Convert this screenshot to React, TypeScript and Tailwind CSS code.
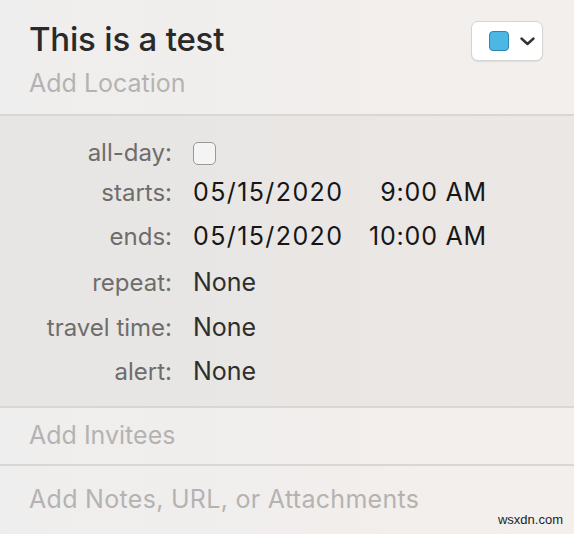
import React from "react";

const labelCls = "w-[172px] shrink-0 text-right text-[24px] text-[#6f6d6c]";

function Row({ label, h, children }: { label: string; h: string; children: React.ReactNode }) {
  return (
    <div className={`flex items-center ${h}`}>
      <div className={labelCls}>{label}</div>
      <div className="ml-[21px] flex items-center">{children}</div>
    </div>
  );
}

export default function App() {
  return (
    <div
      className="relative w-[574px] h-[534px] flex flex-col overflow-hidden bg-gradient-to-r from-[#efeeee] to-[#f3efec]"
      style={{ fontFamily: "Inter, 'Noto Sans', sans-serif" }}
    >
      {/* Header */}
      <div className="h-[114px] shrink-0 flex items-start justify-between pl-[29px] pr-[31px]">
        <div className="flex flex-col">
          <div className="mt-[19px] text-[33px] leading-[40px] font-medium text-[#2a2a2a] tracking-[-0.2px]">
            This is a test
          </div>
          <div className="mt-[8px] text-[25px] leading-[32px] text-[#b5b3b2]">Add Location</div>
        </div>
        <button className="mt-[21px] w-[72px] h-[40px] rounded-[7px] bg-white border border-[#d6d4d3] shadow-[0_1px_1px_rgba(0,0,0,0.08)] flex items-center pl-[17px]">
          <span className="w-[20px] h-[20px] rounded-[4px] bg-[#4bb8e4] border-[1.5px] border-[#2f86aa]" />
          <svg className="ml-[11px]" width="15" height="9" viewBox="0 0 15 9" fill="none">
            <path d="M1.5 1.5 L7.5 7 L13.5 1.5" stroke="#333" strokeWidth="2.4" strokeLinecap="round" strokeLinejoin="round" />
          </svg>
        </button>
      </div>
      <div className="h-[2px] shrink-0 bg-[#d9d6d4]" />

      {/* Middle details */}
      <div className="h-[290px] shrink-0 bg-gradient-to-r from-[#e7e6e5] to-[#ebe7e4] pt-[17px]">
        <Row label="all-day:" h="h-[40px]">
          <span className="block w-[23px] h-[23px] rounded-[5px] border border-[#9b9998] bg-[#f5f4f4]" />
        </Row>
        <Row label="starts:" h="h-[40px]">
          <span className="text-[25px] text-[#161616] w-[150px] tracking-[1.4px]">05/15/2020</span>
          <span className="text-[25px] text-[#161616] w-[144px] text-right tracking-[0.8px]">9:00 AM</span>
        </Row>
        <div className="h-[1px]" />
        <Row label="ends:" h="h-[46px]">
          <span className="text-[25px] text-[#161616] w-[150px] tracking-[1.4px]">05/15/2020</span>
          <span className="text-[25px] text-[#161616] w-[144px] text-right tracking-[0.8px]">10:00 AM</span>
        </Row>
        <Row label="repeat:" h="h-[46px]">
          <span className="text-[25px] text-[#2e2e2e]">None</span>
        </Row>
        <Row label="travel time:" h="h-[44px]">
          <span className="text-[25px] text-[#2e2e2e]">None</span>
        </Row>
        <Row label="alert:" h="h-[44px]">
          <span className="text-[25px] text-[#2e2e2e]">None</span>
        </Row>
      </div>
      <div className="h-[2px] shrink-0 bg-[#d9d6d4]" />

      {/* Invitees */}
      <div className="h-[56px] shrink-0 flex items-center pl-[29px]">
        <span className="text-[25px] text-[#b5b3b2]">Add Invitees</span>
      </div>
      <div className="h-[2px] shrink-0 bg-[#d9d6d4]" />

      {/* Notes */}
      <div className="flex-1 flex items-start pl-[29px] pt-[15px]">
        <span className="text-[25px] text-[#b5b3b2] tracking-[0.3px]">Add Notes, URL, or Attachments</span>
      </div>

      <div
        className="absolute right-[11px] bottom-[5px] text-[13px] text-[#1e1e1e]"
        style={{ fontFamily: "'Liberation Sans', Arial, sans-serif" }}
      >
        wsxdn.com
      </div>
    </div>
  );
}
